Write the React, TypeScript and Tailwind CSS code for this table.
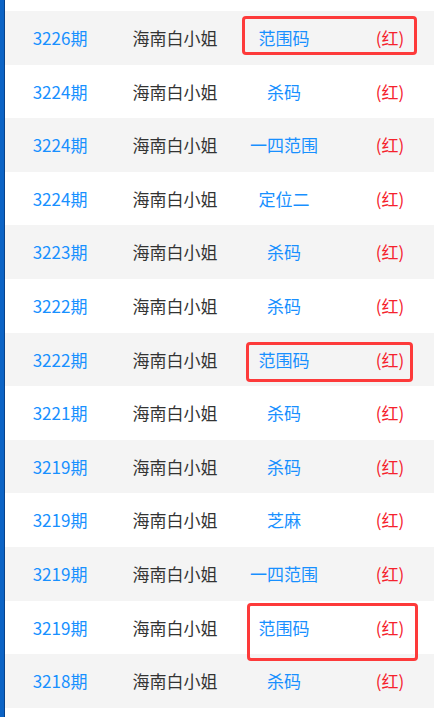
const rows: { issue: string; kind: string; box?: string }[] = [
  { issue: '3226', kind: '范围码', box: 'top-[5px] left-[237px] w-[175px] h-[39px]' },
  { issue: '3224', kind: '杀码' },
  { issue: '3224', kind: '一四范围' },
  { issue: '3224', kind: '定位二' },
  { issue: '3223', kind: '杀码' },
  { issue: '3222', kind: '杀码' },
  { issue: '3222', kind: '范围码', box: 'top-[9px] left-[241px] w-[167px] h-[40px]' },
  { issue: '3221', kind: '杀码' },
  { issue: '3219', kind: '杀码' },
  { issue: '3219', kind: '芝麻' },
  { issue: '3219', kind: '一四范围' },
  { issue: '3219', kind: '范围码', box: 'top-[2px] left-[242px] w-[171px] h-[58px]' },
  { issue: '3218', kind: '杀码' },
];

export default function App() {
  return (
    <div
      className="relative h-[717px] w-[434px] overflow-hidden bg-white pl-[5px] pt-[11px]"
      style={{ fontFamily: '"Noto Sans CJK SC", "Noto Sans", sans-serif' }}
    >
      {/* left edge bar */}
      <div className="absolute left-0 top-0 h-full w-[5px] bg-[#0b63c5] border-r border-[#07428a]" />
      {rows.map((r, i) => (
        <div
          key={i}
          className={`relative grid h-[53.6px] grid-cols-[110px_120px_98px_1fr] items-center text-[17px] ${
            i % 2 === 0 ? 'bg-[#f4f4f4]' : 'bg-white'
          }`}
        >
          <span className="text-center text-[#1890ff]">{r.issue}期</span>
          <span className="text-center text-[#333]">海南白小姐</span>
          <span className="text-center text-[#1890ff]">{r.kind}</span>
          <span className="pl-[13px] text-center text-[#f5222d]">(红)</span>
          {r.box && (
            <div className={`absolute z-10 rounded-[4px] border-[3px] border-[#fd3a3a] ${r.box}`} />
          )}
        </div>
      ))}
    </div>
  );
}
